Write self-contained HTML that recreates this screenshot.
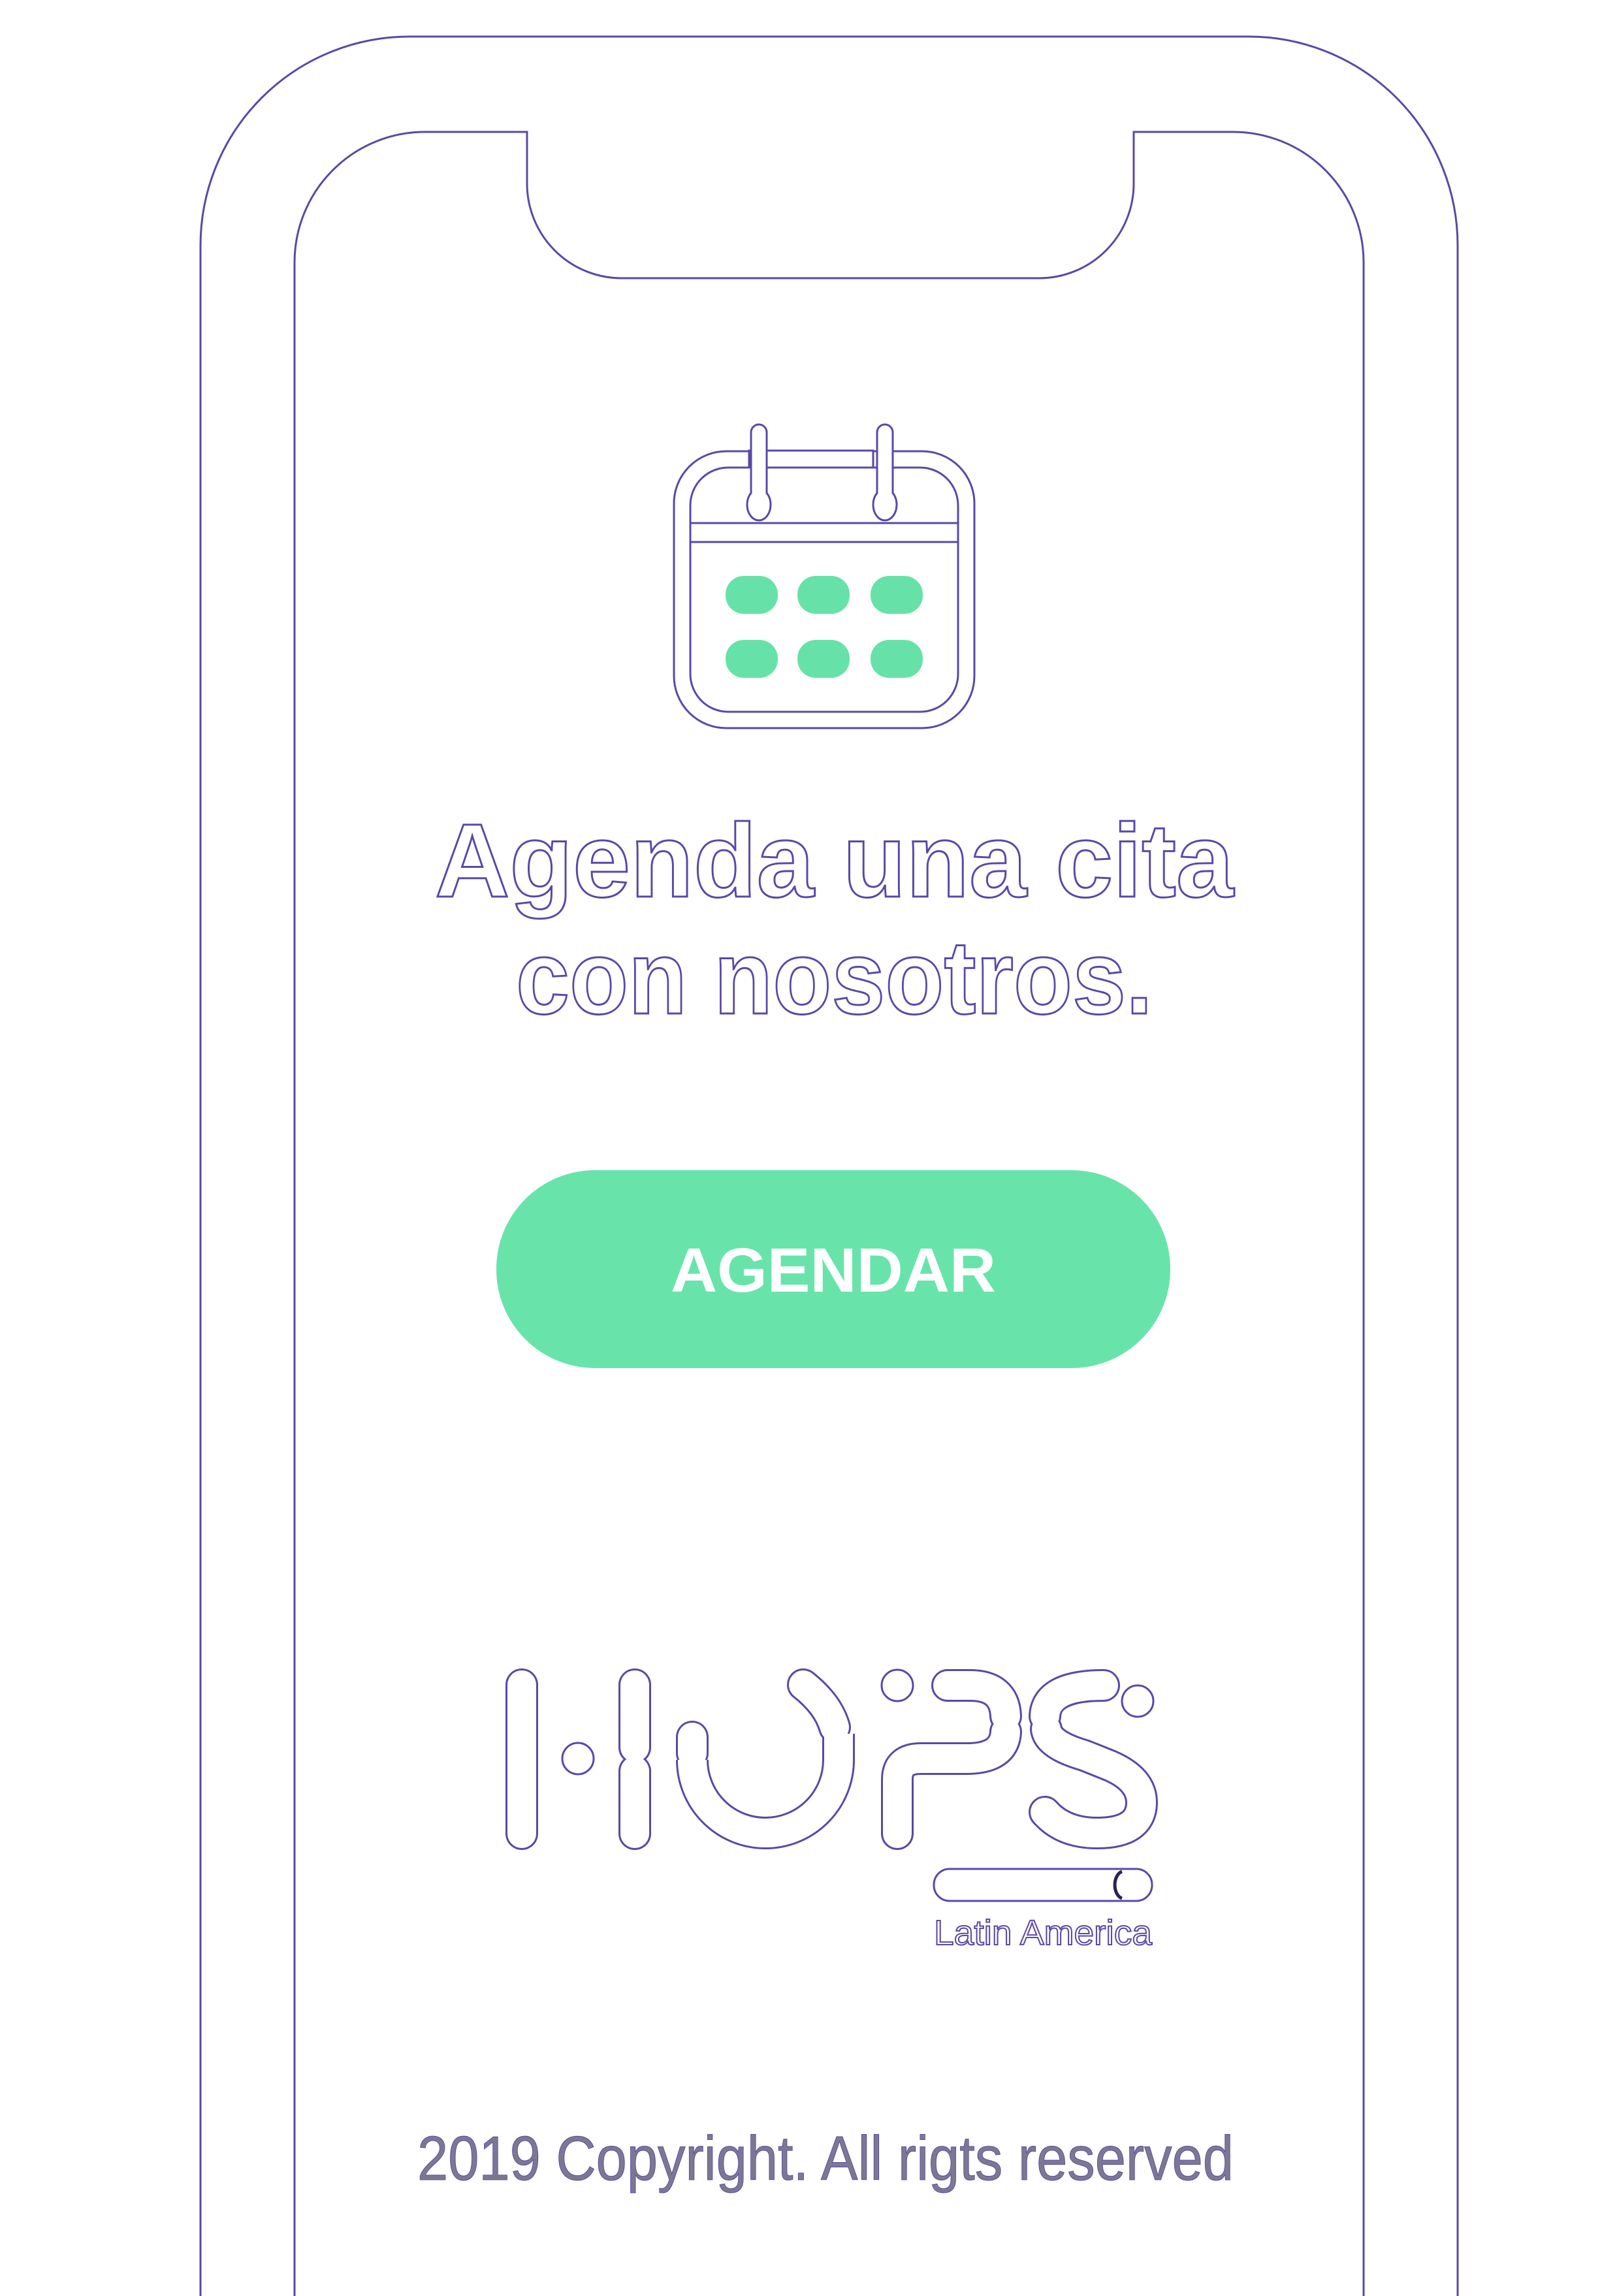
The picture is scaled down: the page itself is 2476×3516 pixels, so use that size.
<!DOCTYPE html>
<html><head><meta charset="utf-8"><style>
html,body{margin:0;padding:0;background:#fff;}
svg{display:block}
</style></head><body>
<svg width="2476" height="3516" viewBox="0 0 2476 3516" xmlns="http://www.w3.org/2000/svg">
<rect width="2476" height="3516" fill="#fff"/>
<g fill="none" stroke="#5a48a8" stroke-width="3">
<path d="M307,3530 L307,376 A320,320 0 0 1 627,56 L1912,56 A320,320 0 0 1 2232,376 L2232,3530"/>
<path d="M451,3530 L451,402 A200,200 0 0 1 651,202 L807,202 L807,281 A145,145 0 0 0 952,426 L1591,426 A145,145 0 0 0 1736,281 L1736,202 L1888,202 A200,200 0 0 1 2088,402 L2088,3530"/>
</g>
<g fill="#fff" stroke="#5a48a8" stroke-width="3">
<rect x="1032" y="691" width="460" height="424" rx="80"/>
<rect x="1057" y="716" width="410" height="374" rx="58"/>
<rect x="1057" y="801" width="410" height="29" fill="#fff"/>
<rect x="1147" y="690" width="190" height="26" fill="#fff"/>
<path d="M1150,662 L1150,755 A18,24 0 1 0 1174,755 L1174,662 A12,12 0 0 0 1150,662Z"/>
<path d="M1343,662 L1343,755 A18,24 0 1 0 1367,755 L1367,662 A12,12 0 0 0 1343,662Z"/>
</g>
<g fill="#66e2a8">
<rect x="1111" y="882" width="80" height="58" rx="28"/>
<rect x="1221" y="882" width="80" height="58" rx="28"/>
<rect x="1333" y="882" width="80" height="58" rx="28"/>
<rect x="1111" y="980" width="80" height="58" rx="28"/>
<rect x="1221" y="980" width="80" height="58" rx="28"/>
<rect x="1333" y="980" width="80" height="58" rx="28"/>
</g>
<g font-family="Liberation Sans, sans-serif" font-weight="bold" font-size="160" fill="#fff" stroke="#5a48a8" stroke-width="3">
<text x="666" y="1373" textLength="1223" lengthAdjust="spacingAndGlyphs">Agenda una cita</text>
<text x="790" y="1552" textLength="975" lengthAdjust="spacingAndGlyphs">con nosotros.</text>
</g>
<rect x="760" y="1792" width="1032" height="303" rx="151" fill="#68e4ab"/>
<text x="1276" y="1978" text-anchor="middle" font-family="Liberation Sans, sans-serif" font-weight="bold" font-size="96" fill="#fff" textLength="498" lengthAdjust="spacingAndGlyphs">AGENDAR</text>
<g fill="none" stroke-linecap="round">
<g stroke="#5a48a8" stroke-width="50">
<path d="M799,2580 L799,2808"/>
<path d="M972,2580 L972,2676"/>
<path d="M972,2712 L972,2808"/>
<path d="M1060,2660 L1060,2685"/>
<path d="M1060,2699 L1060,2695 A112,112 0 0 0 1284,2695 L1284,2655" stroke-linecap="butt"/>
<path d="M1230,2580 Q1268,2610 1278,2645"/>
<path d="M1374,2808 L1374,2725 Q1374,2693 1410,2693 L1480,2693 Q1538,2693 1540,2652"/>
<path d="M1451,2581 L1485,2581 Q1538,2581 1540,2628"/>
<path d="M1690,2581 Q1602,2581 1600,2628"/>
<path d="M1602,2648 Q1605,2672 1660,2688 L1700,2704 Q1748,2725 1748,2760 Q1748,2807 1680,2807 Q1628,2807 1600,2775"/>
</g>
<g stroke="#fff" stroke-width="44">
<path d="M799,2580 L799,2808"/>
<path d="M972,2580 L972,2676"/>
<path d="M972,2712 L972,2808"/>
<path d="M1060,2660 L1060,2685"/>
<path d="M1060,2699 L1060,2695 A112,112 0 0 0 1284,2695 L1284,2655" stroke-linecap="butt"/>
<path d="M1230,2580 Q1268,2610 1278,2645"/>
<path d="M1374,2808 L1374,2725 Q1374,2693 1410,2693 L1480,2693 Q1538,2693 1540,2652"/>
<path d="M1451,2581 L1485,2581 Q1538,2581 1540,2628"/>
<path d="M1690,2581 Q1602,2581 1600,2628"/>
<path d="M1602,2648 Q1605,2672 1660,2688 L1700,2704 Q1748,2725 1748,2760 Q1748,2807 1680,2807 Q1628,2807 1600,2775"/>
</g>
</g>
<g fill="#fff" stroke="#5a48a8" stroke-width="3">
<ellipse cx="885" cy="2693" rx="24" ry="24"/>
<ellipse cx="1374" cy="2581" rx="24" ry="24"/>
<ellipse cx="1742" cy="2605" rx="24" ry="24"/>
<rect x="1430" y="2862" width="334" height="49" rx="24"/>
<path d="M1718,2866 A14,21 0 0 0 1718,2907" fill="none" stroke="#2a2250" stroke-width="5"/>
</g>
<text x="1430" y="2978" font-family="Liberation Sans, sans-serif" font-size="54" fill="#fff" stroke="#5a48a8" stroke-width="2" textLength="334" lengthAdjust="spacingAndGlyphs">Latin America</text>
<text x="639" y="3338" font-family="Liberation Sans, sans-serif" font-size="96" fill="#7c7892" stroke="#5a48a8" stroke-width="1" textLength="1250" lengthAdjust="spacingAndGlyphs">2019 Copyright. All rigts reserved</text>
</svg>
</body></html>
